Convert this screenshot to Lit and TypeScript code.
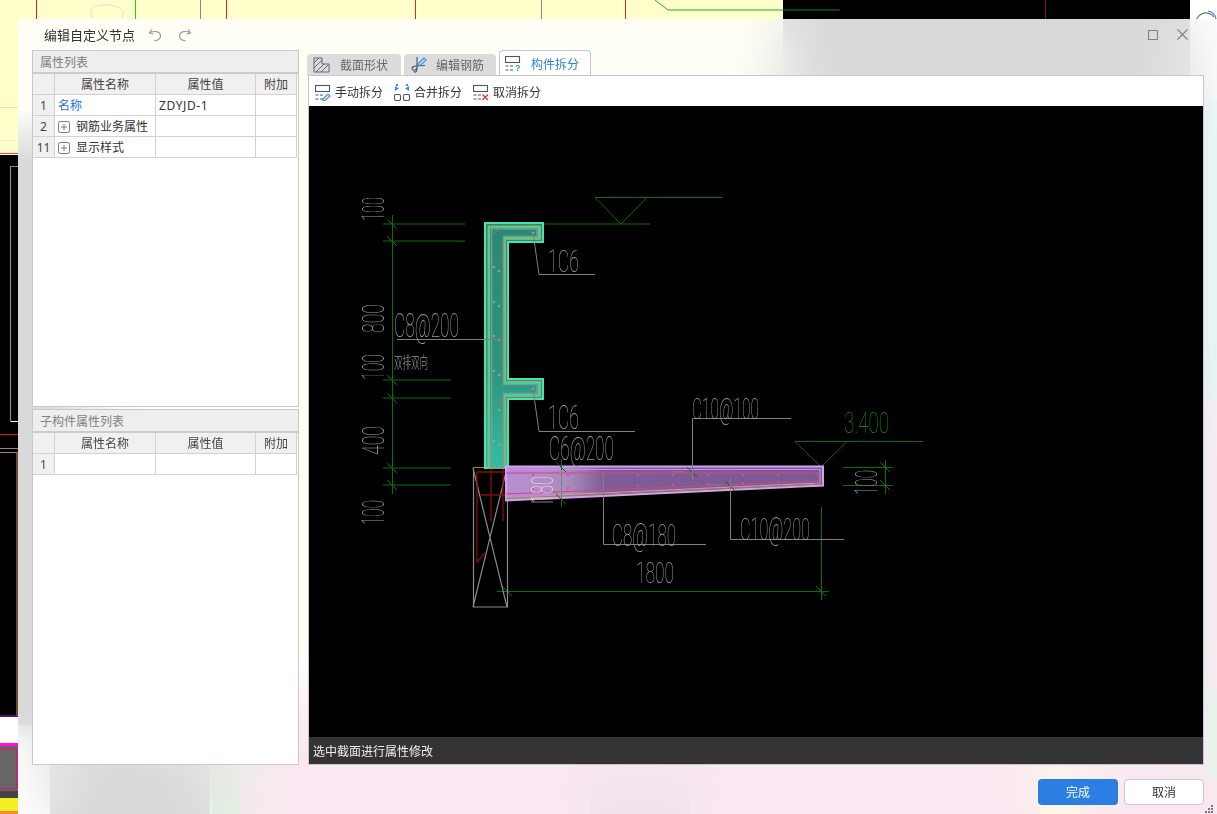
import { LitElement, html, css, svg } from "lit";
import { customElement } from "lit/decorators.js";

const t = (s: string, x: number, base: number, w: number, h: number, cls = "") =>
  svg`<text class=${cls} x=${x} y=${base} font-size=${(h / 0.711).toFixed(1)} textLength=${w} lengthAdjust="spacingAndGlyphs">${s}</text>`;
const r = (s: string, base: number, bottom: number, len: number, h: number, cls = "") =>
  svg`<text class=${cls} transform="translate(${base},${bottom}) rotate(-90)" font-size=${(h / 0.711).toFixed(1)} textLength=${len} lengthAdjust="spacingAndGlyphs">${s}</text>`;
const tick = (x: number, y: number) => svg`<path class="g" d="M${x - 5} ${y - 5}L${x + 5} ${y + 5}"/>`;

const rowsA = [
  { n: "1", name: "名称", val: "ZDYJD-1", blue: true },
  { n: "2", name: "钢筋业务属性", exp: true },
  { n: "11", name: "显示样式", exp: true },
];

@customElement("app-root")
export class AppRoot extends LitElement {
  static styles = css`
    :host { display: block; position: relative; width: 1217px; height: 814px; overflow: hidden; background: #fff;
      font-family: "Noto Sans", "Noto Sans CJK SC", sans-serif; font-size: 12px; color: #333; }
    .desk { position: absolute; inset: 0; }
    .dialog { position: absolute; left: 18px; top: 19px; right: 0; bottom: 0; display: flex; flex-direction: column;
      padding: 0 13px 0 14px; backdrop-filter: blur(30px); box-sizing: border-box;
      background: linear-gradient(to bottom, #d9d9d900 90px, #d9d9d9 150px, #d9d9d9 680px, #d9d9d900 725px) 0 0 / 14px 100% no-repeat, rgba(255,255,255,.85); }
    .title { height: 31px; display: flex; align-items: center; padding-left: 12px; flex: none; }
    .title .name { font-size: 13px; width: 104px; color: #333; }
    .title svg { display: block; }
    .ic { fill: none; stroke: #999; stroke-width: 1.2; }
    .undo { margin-right: 16px; }
    .spacer { flex: 1; }
    .winbtn { fill: none; stroke: #808080; stroke-width: 1.1; }
    .max { margin-right: 19px; }
    .close { margin-right: 16px; }
    .body { flex: none; display: flex; gap: 9px; height: 715px; }
    .left { width: 267px; display: flex; flex-direction: column; gap: 2px; flex: none; }
    .panel { flex: 1; border: 1px solid #c8c8c8; background: #fff; box-sizing: border-box; display: flex; flex-direction: column; }
    .phead { height: 23px; box-sizing: border-box; background: #eee; color: #808080; padding-left: 7px; line-height: 23px; border-bottom: 2px solid #ccc; flex: none; }
    .table { display: grid; grid-template-columns: 22px 101px 100px 41px; width: 264px; }
    .cell { box-sizing: border-box; height: 21px; line-height: 22px; padding: 0 3px; border-right: 1px solid #d2d2d2; border-bottom: 1px solid #d2d2d2; white-space: nowrap; overflow: hidden; }
    .hd { background: #f0f0f0; text-align: center; color: #444; }
    .idx { background: #f0f0f0; text-align: center; padding: 0; color: #444; }
    .val { letter-spacing: .6px; }
    .namecell { display: flex; align-items: center; gap: 6px; padding-top: 1px; }
    .blue { color: #2a6fe0; }
    .plus { display: block; flex: none; }
    .plus * { fill: none; stroke: #777; stroke-width: 1; }
    .right { width: 896px; flex: none; display: flex; flex-direction: column; }
    .tabs { height: 25px; display: flex; align-items: flex-end; gap: 3px; margin-left: -1px; flex: none; }
    .tab { height: 21px; width: 92px; background: #dcdcdc; border-radius: 4px 4px 0 0; display: flex; align-items: center; gap: 9px; padding: 1px 0 0 6px; box-sizing: border-box; color: #666; flex: none; }
    .tab.first { width: 94px; gap: 10px; }
    .tab.on { height: 25px; background: #fff; border: 1px solid #c4c8d0; border-bottom: 0; color: #2b7fe3; gap: 9px; padding-left: 5px; }
    .content { flex: 1; border: 1px solid #c4c8d0; border-left-color: #c8c8c8; display: flex; flex-direction: column; min-height: 0; }
    .toolbar { height: 30px; background: #fff; display: flex; align-items: center; padding: 2px 0 0 6px; gap: 11px; flex: none; box-sizing: border-box; }
    .tool { display: flex; align-items: center; gap: 4px; color: #333; }
    .canvas { flex: 1; background: #000; min-height: 0; }
    .canvas svg { display: block; }
    .status { height: 27px; background: #333; color: #eee; line-height: 29px; padding-left: 4px; flex: none; }
    .foot { flex: 1; display: flex; justify-content: flex-end; align-items: flex-start; gap: 6px; padding-top: 14px; }
    .btn { width: 80px; height: 26px; border-radius: 4px; box-sizing: border-box; text-align: center; line-height: 28px; }
    .btn.ok { background: #2b7fe3; color: #fff; }
    .btn.no { background: #fff; border: 1px solid #c8c8c8; line-height: 26px; color: #333; }
    .grip { position: absolute; right: 3px; bottom: 0; }
    .grip rect { fill: #777; }
    .dk { fill: none; stroke: #4a5468; stroke-width: 1.1; }
    .hatch { fill: none; stroke: #555c6c; stroke-width: .9; }
    .dash { fill: none; stroke: #4a5468; stroke-width: 1.1; stroke-dasharray: 3 1.5; }
    .bl { fill: none; stroke: #3b8ee8; stroke-width: 1.2; }
    .blf { fill: #3b8ee8; }
    .rd { fill: none; stroke: #e0342c; stroke-width: 1.3; }
    .cad text { font-family: Roboto, "Liberation Sans", sans-serif; font-weight: 100; fill: #a0a0a0; }
    .cad text.gt { fill: #108a10; }
    .cad text.pk { fill: #f0d8f4; }
    .cad text.cn { font-family: "Noto Sans CJK SC", sans-serif; font-weight: 300; fill: #999; }
    .cad path, .cad line { fill: none; }
    .g { stroke: #0a6e0a; stroke-width: 1; }
    .gy { stroke: #808080; stroke-width: 1; }
    .dr { stroke: #8a0c0c; stroke-width: 1.3; }
    .wh { stroke: #8a8a8a; stroke-width: 1.2; }
    .ol { stroke: #9a8a20; stroke-width: 1; }
    .col { stroke: #3fe3bf; stroke-width: 2; }
    .col1 { fill: none; stroke: #3ad6b4; stroke-width: 2; }
    .col2 { fill: none; stroke: #d8a020; stroke-width: .9; }
    .col3 { fill: none; stroke: #72a096; stroke-width: 1.6; }
    .bm { stroke: #d4a0f4; stroke-width: 2; }
    .bm1 { fill: none; stroke: #c290e4; stroke-width: 1.2; }
    .pl { stroke: #d8408f; stroke-width: 1; }
    .dotg { fill: #86a49c; }
    .dotp { fill: #d8508f; }
  `;

  desk() {
    return html`<svg class="desk" width="1217" height="814" viewBox="0 0 1217 814">
      <rect width="1217" height="814" fill="#fff"/>
      <rect width="790" height="155" fill="#ffffcc"/>
      <rect x="783" width="407" height="160" fill="#000"/>
      <rect x="20" y="155" width="770" height="560" fill="#fdfdd0"/>
      <rect x="790" y="155" width="400" height="560" fill="#000"/>
      <rect x="1190" y="100" width="27" height="300" fill="#80e0e0"/>
      <rect x="1190" y="400" width="27" height="300" fill="#e8a0c8"/>
      <rect y="155" width="85" height="570" fill="#000"/>
      <rect x="240" y="700" width="977" height="114" fill="#d765a0"/>
      <rect x="1040" y="745" width="40" height="69" fill="#f0f060"/>
      <rect x="1205" y="690" width="12" height="90" fill="#40d060"/>
      <rect x="50" y="725" width="160" height="89" fill="#000"/>
      <rect x="212" y="725" width="28" height="89" fill="#2fbb2f"/>
      <rect x="590" y="770" width="100" height="44" fill="#a04878"/>
      <g fill="none" stroke-width="1">
        <path stroke="#e02020" d="M36.500 0V19M226.500 0V19"/>
        <path stroke="#20d020" d="M135.500 0V19"/>
        <path stroke="#888" d="M200.500 0V19M541.500 0V19"/>
        <path stroke="#ddd" d="M92 18C88 6 96 5 106 5S126 8 122 18"/>
        <path stroke="#d03030" d="M415.500 0V19M625.500 0V19"/>
        <path stroke="#20b020" d="M655 0L668 10H783"/>
        <path stroke="#0c8a0c" d="M783 10H840"/>
        <path stroke="#901010" d="M1045.500 0V19"/>
        <path stroke="#fbd9a9" d="M0 107.500H18"/>
        <path stroke="#f4f0d8" d="M0 140.500H18"/>
        <path stroke="#f04040" d="M0 153.500H18"/>
        <path stroke="#888" stroke-width="1.200" d="M18 166.500H10.500V421"/>
        <path stroke="#fff" d="M10.500 421.500H18"/>
        <path stroke="#e01010" d="M0 434.500H18"/>
        <path stroke="#888" d="M0 448.500H18"/>
        <path stroke="#b08050" stroke-width="1.200" d="M0 452.500H17V716"/>
        <path stroke="#c010e0" d="M0 716H18"/>
      </g>
      <rect y="717" width="18" height="26" fill="#fff"/>
      <rect y="743" width="18" height="3" fill="#ff10e0"/>
      <rect y="746" width="18" height="45" fill="#666"/>
      <path d="M0 749H17V789H0" fill="none" stroke="#e01080" stroke-width="1.200"/>
      <rect y="791" width="18" height="7" fill="#444"/>
      <rect y="798" width="18" height="13" fill="#f4f022"/>
      <rect y="811" width="18" height="3" fill="#f09030"/>
      <path d="M1196 24A10 10 0 0 1 1214 17" fill="none" stroke="#777" stroke-width="1.200"/>
      <path d="M1208 11A10 10 0 0 1 1216 19" fill="none" stroke="#3b8ee8" stroke-width="1.200"/>
    </svg>`;
  }

  table(rows: any[]) {
    return html`<div class="table">
      <div class="cell hd"></div><div class="cell hd">属性名称</div><div class="cell hd">属性值</div><div class="cell hd">附加</div>
      ${rows.map(
        (x) => html`<div class="cell idx">${x.n}</div>
          <div class="cell namecell ${x.blue ? "blue" : ""}">
            ${x.exp
              ? html`<svg class="plus" width="12" height="12" viewBox="0 0 12 12"><rect x=".5" y=".5" width="11" height="11" rx="2"/><path d="M3 6H9M6 3V9"/></svg>`
              : ""}${x.name}
          </div>
          <div class="cell val">${x.val || ""}</div><div class="cell"></div>`
      )}
    </div>`;
  }

  splitBase() {
    return svg`<rect class="dk" x=".5" y="1.500" width="14" height="6"/><path class="dash" d="M.500 11H8M.500 15H8"/>`;
  }

  drawing() {
    const colPts = "485,223 543,223 543,242 508,242 508,379 543,379 543,399 508,399 508,468 485,468";
    const rim = "489,227 539,227 539,238 504.500,238 504.500,383 539,383 539,395 504.500,395 504.500,468 489,468";
    const inner = "488,226 540.500,226 540.500,239.500 505.500,239.500 505.500,381.500 540.500,381.500 540.500,396.500 505.500,396.500 505.500,468 488,468";
    const rebar = "491.500,229 537,229 537,236.500 503.500,236.500 503.500,384.500 537,384.500 537,393.500 503.500,393.500 503.500,468 491.500,468";
    const dotsG = [[494, 267], [499, 271], [494, 302], [499, 306], [494, 336], [499, 340], [494, 371], [499, 375], [499, 410], [494, 441], [499, 445], [533, 233], [533, 389]];
    const pxs = [533, 568, 603, 638, 673, 708, 743, 778];
    return svg`<svg class="cad" width="894" height="631" viewBox="309 106 894 631">
      <defs>
        <linearGradient id="cg" x1="0" y1="0" x2="0" y2="1"><stop offset="0" stop-color="#2c8872"/><stop offset=".6" stop-color="#2e9480"/><stop offset="1" stop-color="#33bda0"/></linearGradient>
        <linearGradient id="bg" x1="0" y1="0" x2="1" y2="0"><stop offset="0" stop-color="#b88ed4"/><stop offset=".2" stop-color="#a98cbc"/><stop offset=".31" stop-color="#7e5c96"/><stop offset="1" stop-color="#7b5a92"/></linearGradient>
      </defs>
      <path class="g" d="M392.500 215V494M383 224H465M383 241H465M383 380H451M383 398H451M383 468H451M383 485H451"/>
      ${[224, 241, 380, 398, 468, 485].map((y) => tick(392, y))}
      <path class="g" d="M543 224H650M595 197.500H723M595 197.500L621 224L647 197.500"/>
      <path class="g" d="M795 441.500H923M795 441.500L821 467L847 441.500"/>
      <path class="g" d="M843 467.500H893M843 485.500H893M885.500 460V494"/>${tick(885, 467)}${tick(885, 485)}
      <path class="g" d="M497 591.500H829M821.500 507V600M507.500 583V597"/>${tick(507, 591)}${tick(821, 591)}
      <path class="wh" d="M473.500 468V607H507.500V468M473 468L507 607M507 468L473 607"/>
      <path class="dr" d="M477 472H506M477 472V562L485 553M491 468V521M503 468V521M480 495H507"/>
      <path class="ol" d="M473 467.500H507"/>
      <polygon class="col" points=${colPts} fill="url(#cg)"/>
      <polygon class="col1" points=${rim}/>
      <polygon class="col2" points=${inner}/>
      <polygon class="col3" points=${rebar}/>
      <path class="gy" d="M491 235L501 228M490 412L502 400"/>
      ${dotsG.map(([x, y]) => svg`<circle class="dotg" cx=${x} cy=${y} r="1.300"/>`)}
      <polygon class="bm" points="506,466.500 823,466.500 823,485.500 506,500.500" fill="url(#bg)"/>
      <path class="bm1" d="M507 469.500H820V483L507 497.500"/>
      <path class="pl" d="M506 473H818V481L506 494"/>
      <path class="ol" d="M506 498.500L823 484"/>
      ${pxs.map((x, i) => svg`<circle class="dotp" cx=${x} cy="475" r="1.200"/><circle class="dotp" cx=${x} cy=${(489 - i * 1).toFixed(1)} r="1.200"/>`)}
      <path class="gy" d="M816 472L822 479"/>
      <path class="g" d="M561.500 459V507"/><path class="gy" d="M561.500 470V500"/>${tick(561, 467)}${tick(561, 499)}
      <path class="gy" d="M531 502H553M670 472H684M708 485H722"/>${tick(692, 472)}${tick(730, 486)}
      <path class="gy" d="M533 233L539 274.500H595M397 339.500H503M533 389L539 431.500H635M692.500 480V418.500H791M730.500 478V539.500H844M603.500 475V544.500H706"/>
      ${r("100", 384, 221, 24, 22)}${r("800", 384, 333, 29, 22)}${r("100", 384, 380, 26, 22)}${r("400", 384, 455, 29, 22)}${r("100", 384, 525, 25, 22)}
      ${t("1C6", 548, 272, 31, 22)}${t("C8@200", 394, 337, 65, 23)}${t("1C6", 548, 429, 31, 23)}${t("C6@200", 549, 460, 65, 23)}
      ${t("C8@180", 612, 546, 64, 22)}${t("C10@100", 692, 419, 67, 21)}${t("C10@200", 740, 540, 70, 22)}${t("1800", 636, 583, 38, 21)}
      ${t("3.400", 844, 433, 45, 21, "gt")}
      ${r("180", 553, 503, 27, 22, "pk")}${r("100", 877, 495, 25, 22)}
      <text class="cn" x="394" y="368" font-size="16" textLength="34" lengthAdjust="spacingAndGlyphs">双排双向</text>
    </svg>`;
  }

  render() {
    return html`${this.desk()}
      <div class="dialog">
        <div class="title">
          <span class="name">编辑自定义节点</span>
          <svg class="undo" width="14" height="14" viewBox="0 0 14 14"><path class="ic" d="M4 1.500L1.500 5L5.500 6M1.500 5C5 2.500 12.500 3 12.500 8C12.500 11 9.500 13 6.500 12.500"/></svg>
          <svg width="14" height="14" viewBox="0 0 14 14"><path class="ic" d="M10 1.500L12.500 5L8.500 6M12.500 5C9 2.500 1.500 3 1.500 8C1.500 11 4.500 13 7.500 12.500"/></svg>
          <div class="spacer"></div>
          <svg class="max" width="10" height="10" viewBox="0 0 10 10"><rect class="winbtn" x=".5" y=".5" width="9" height="9" rx=".5"/></svg>
          <svg class="close" width="11" height="11" viewBox="0 0 11 11"><path class="winbtn" d="M.5 .5L10.500 10.500M10.500 .5L.5 10.500"/></svg>
        </div>
        <div class="body">
          <div class="left">
            <div class="panel"><div class="phead">属性列表</div>${this.table(rowsA)}</div>
            <div class="panel"><div class="phead">子构件属性列表</div>${this.table([{ n: "1", name: "" }])}</div>
          </div>
          <div class="right">
            <div class="tabs">
              <div class="tab first">
                <svg width="17" height="17" viewBox="0 0 17 17"><path class="hatch" d="M1 1H9V7H16V15H1Z"/><path class="hatch" d="M1 6L6 1M1 11L9 3M3 15L11 7M8 15L15 8"/></svg>截面形状
              </div>
              <div class="tab">
                <svg width="17" height="19" viewBox="0 0 17 19"><path class="dk" d="M7 1V11C7 15 2 15 2 12.500C2 10 6 9.500 15 9.500"/><path class="dk" d="M7 12C7 16 5 17.500 4 15"/><path class="bl" d="M9 7L14 2L16 4L11 9L8.500 9.500Z"/></svg>编辑钢筋
              </div>
              <div class="tab on">
                <svg width="17" height="17" viewBox="0 0 17 17">${this.splitBase()}<text x="10" y="16" font-size="9" font-weight="700" fill="#3b8ee8" font-family="Liberation Sans">?</text></svg>构件拆分
              </div>
            </div>
            <div class="content">
              <div class="toolbar">
                <div class="tool"><svg width="16" height="17" viewBox="0 0 16 17">${this.splitBase()}<path class="bl" d="M8 15L13 10L15 12L10 16.500L8 16.500Z"/></svg>手动拆分</div>
                <div class="tool"><svg width="16" height="17" viewBox="0 0 16 17"><path class="blf" d="M1 2L5 4.500L1 7ZM15 2L11 4.500L15 7Z"/><path class="blf" d="M2 0H4V2H2ZM12 0H14V2H12Z"/><rect class="dk" x=".5" y="10.500" width="6" height="6" rx="1.500"/><rect class="dk" x="9.500" y="10.500" width="6" height="6" rx="1.500"/></svg>合并拆分</div>
                <div class="tool"><svg width="16" height="17" viewBox="0 0 16 17">${this.splitBase()}<path class="rd" d="M9.500 10.500L15 16M15 10.500L9.500 16"/></svg>取消拆分</div>
              </div>
              <div class="canvas">${this.drawing()}</div>
              <div class="status">选中截面进行属性修改</div>
            </div>
          </div>
        </div>
        <div class="foot"><div class="btn ok">完成</div><div class="btn no">取消</div></div>
        <svg class="grip" width="9" height="9" viewBox="0 0 9 9"><rect x="6" y="0" width="2" height="2"/><rect x="3" y="3" width="2" height="2"/><rect x="6" y="3" width="2" height="2"/><rect x="0" y="6" width="2" height="2"/><rect x="3" y="6" width="2" height="2"/><rect x="6" y="6" width="2" height="2"/></svg>
      </div>`;
  }
}
